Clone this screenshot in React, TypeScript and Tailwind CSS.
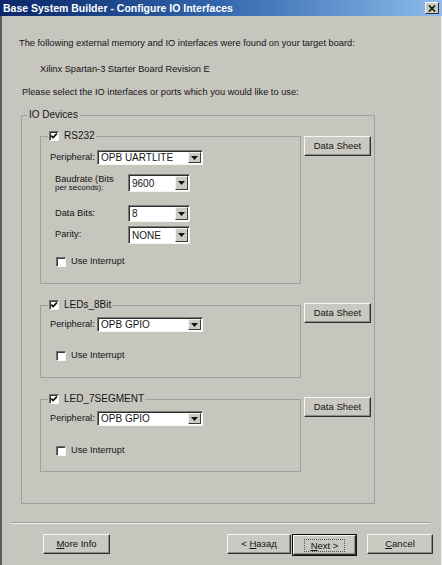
import React from "react";

const Check = ({ checked }: { checked?: boolean }) => (
  <span className="inline-flex h-[10px] w-[10px] shrink-0 items-center justify-center border border-t-[#6e6e6a] border-l-[#6e6e6a] border-r-[#f4f4f0] border-b-[#f4f4f0] bg-white shadow-[inset_1px_1px_0_#3c3c3c]">
    {checked && (
      <svg width="8" height="8" viewBox="0 0 8 8">
        <path d="M1.2 3.6 L3.1 5.6 L6.9 1.6" fill="none" stroke="#111" strokeWidth="1.7" />
      </svg>
    )}
  </span>
);

const Select = ({ value, w, h }: { value: string; w: string; h: string }) => (
  <div
    className={`flex ${w} ${h} items-stretch border border-t-[#7a7a76] border-l-[#7a7a76] border-r-[#f4f4f0] border-b-[#f4f4f0] bg-white shadow-[inset_1px_1px_0_#2e2e2e]`}
  >
    <span className="flex flex-1 items-center pl-[3px] pt-[1px] text-[10px] leading-none text-[#151515]">
      {value}
    </span>
    <span className="m-[1px] flex w-[13px] items-center justify-center border border-t-[#f2f2ee] border-l-[#f2f2ee] border-r-[#3a3a3a] border-b-[#3a3a3a] bg-[#cbcac3]">
      <svg width="7" height="4" viewBox="0 0 7 4">
        <path d="M0 0 H7 L3.5 4 Z" fill="#111" />
      </svg>
    </span>
  </div>
);

const Button = ({ children, w, className = "" }: { children: React.ReactNode; w: string; className?: string }) => (
  <div
    className={`flex h-[20px] ${w} items-center justify-center border border-t-[#f6f6f2] border-l-[#f6f6f2] border-r-[#2f2f2f] border-b-[#2f2f2f] bg-[#c9c8c1] text-[9.5px] text-[#151515] shadow-[inset_-1px_-1px_0_#8c8b86] ${className}`}
  >
    {children}
  </div>
);

const Group = ({ label, children }: { label: string; children: React.ReactNode }) => (
  <fieldset className="w-[261px] border border-[#a09f99] p-0">
    <legend className="ml-[7px] px-[1px]">
      <span className="flex h-[12px] items-center gap-[5px] text-[10px] leading-[12px] text-[#151515]">
        <Check checked />
        {label}
      </span>
    </legend>
    {children}
  </fieldset>
);

const Peripheral = ({ value, mt }: { value: string; mt: string }) => (
  <div className={`${mt} flex items-center pl-[9px]`}>
    <span className="w-[47px] text-[9.25px] leading-none text-[#151515]">Peripheral:</span>
    <Select value={value} w="w-[106px]" h="h-[15px]" />
  </div>
);

const Interrupt = ({ mt }: { mt: string }) => (
  <div className={`${mt} flex h-[10px] items-center gap-[5px] pl-[15px]`}>
    <Check />
    <span className="text-[9.25px] leading-none text-[#151515]">Use Interrupt</span>
  </div>
);

export default function App() {
  return (
    <div className="flex h-[565px] w-[442px] flex-col overflow-hidden bg-[#c6c5be] font-['Liberation_Sans',Arial,sans-serif] shadow-[inset_2px_0_0_#5e5e5a,inset_-1px_0_0_#eeeeea]">
      {/* title bar */}
      <div className="flex h-[16px] items-center bg-gradient-to-r from-[#0b2668] via-[#3467ad] to-[#8cbdec]">
        <span className="ml-[3px] text-[10.5px] font-bold leading-none text-white">
          Base System Builder - Configure IO Interfaces
        </span>
        <span className="ml-auto mr-[3px] flex h-[12px] w-[14px] items-center justify-center border border-t-[#f4f4f0] border-l-[#f4f4f0] border-r-[#2f2f2f] border-b-[#2f2f2f] bg-[#c9c8c1]">
          <svg width="8" height="7" viewBox="0 0 8 7">
            <path d="M1 0.5 L7 6.5 M7 0.5 L1 6.5" stroke="#111" strokeWidth="1.6" />
          </svg>
        </span>
      </div>

      <p className="ml-[19px] mt-[21px] text-[9.25px] leading-[12px] text-[#151515]">
        The following external memory and IO interfaces were found on your target board:
      </p>
      <p className="ml-[40px] mt-[14px] text-[9.25px] leading-[12px] text-[#151515]">
        Xilinx Spartan-3 Starter Board Revision E
      </p>
      <p className="ml-[22px] mt-[11px] text-[9.25px] leading-[12px] text-[#151515]">
        Please select the IO interfaces or ports which you would like to use:
      </p>

      <fieldset className="ml-[21px] mt-[11px] w-[354px] border border-[#a09f99] p-0">
        <legend className="ml-[5px] px-[2px] text-[10px] leading-[12px] text-[#151515]">IO Devices</legend>
        <div className="pb-[31px] pl-[18px] pt-[9px]">
          {/* RS232 */}
          <div className="flex items-start gap-[3px]">
            <Group label="RS232">
              <Peripheral value="OPB UARTLITE" mt="mt-[8px]" />
              <div className="mt-[9px] flex items-start pl-[14px]">
                <div className="h-[18px] w-[73px] pt-[1px] text-[#151515]">
                  <div className="text-[9.25px] leading-[9px]">Baudrate (Bits</div>
                  <div className="text-[8px] leading-[8px]">per seconds):</div>
                </div>
                <Select value="9600" w="w-[62px]" h="h-[18px]" />
              </div>
              <div className="mt-[13px] flex items-center pl-[14px]">
                <span className="w-[73px] text-[9.25px] leading-none text-[#151515]">Data Bits:</span>
                <Select value="8" w="w-[62px]" h="h-[17px]" />
              </div>
              <div className="mt-[4px] flex items-center pl-[14px]">
                <span className="w-[73px] text-[9.25px] leading-none text-[#151515]">Parity:</span>
                <Select value="NONE" w="w-[62px]" h="h-[18px]" />
              </div>
              <Interrupt mt="mt-[13px]" />
              <div className="h-[16px]" />
            </Group>
            <Button w="w-[67px]" className="mt-[6px]">
              Data Sheet
            </Button>
          </div>

          {/* LEDs_8Bit */}
          <div className="mt-[15px] flex items-start gap-[3px]">
            <Group label="LEDs_8Bit">
              <Peripheral value="OPB GPIO" mt="mt-[6px]" />
              <Interrupt mt="mt-[19px]" />
              <div className="h-[16px]" />
            </Group>
            <Button w="w-[67px]" className="mt-[4px]">
              Data Sheet
            </Button>
          </div>

          {/* LED_7SEGMENT */}
          <div className="mt-[15px] flex items-start gap-[3px]">
            <Group label="LED_7SEGMENT">
              <Peripheral value="OPB GPIO" mt="mt-[6px]" />
              <Interrupt mt="mt-[20px]" />
              <div className="h-[15px]" />
            </Group>
            <Button w="w-[67px]" className="mt-[4px]">
              Data Sheet
            </Button>
          </div>
        </div>
      </fieldset>

      <div className="mx-[12px] mt-[18px] h-[2px] border-t border-b border-t-[#9a9994] border-b-[#f2f2ee]" />

      <div className="mt-[10px] flex items-start">
        <Button w="w-[67px]" className="ml-[43px]">
          <span>
            <span className="underline">M</span>ore Info
          </span>
        </Button>
        <Button w="w-[64px]" className="ml-[117px]">
          <span>
            &lt; <span className="underline">Н</span>азад
          </span>
        </Button>
        <div className="ml-[1px] border border-[#111]">
          <Button w="w-[63px]" className="h-[18px]">
            <span className="border border-dotted border-[#555] px-[6px] leading-[11px]">
              <span className="underline">N</span>ext &gt;
            </span>
          </Button>
        </div>
        <Button w="w-[66px]" className="ml-[10px]">
          <span>
            <span className="underline">C</span>ancel
          </span>
        </Button>
      </div>
    </div>
  );
}
